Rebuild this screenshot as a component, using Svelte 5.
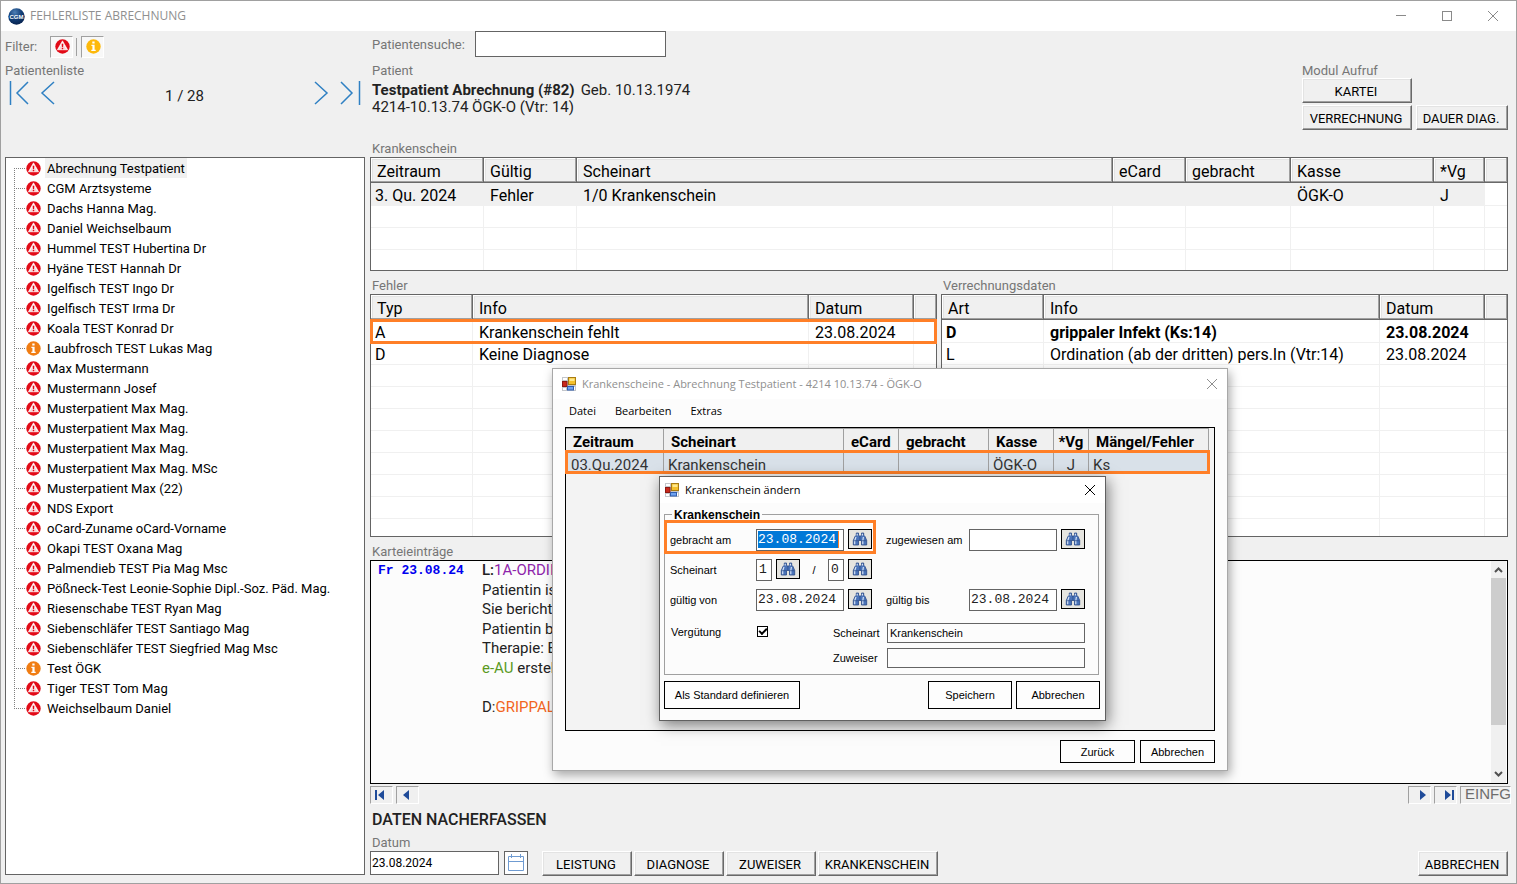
<script>
  const patients = [
    'Abrechnung Testpatient', 'CGM Arztsysteme', 'Dachs Hanna Mag.', 'Daniel Weichselbaum',
    'Hummel TEST Hubertina Dr', 'Hyäne TEST Hannah Dr', 'Igelfisch TEST Ingo Dr', 'Igelfisch TEST Irma Dr',
    'Koala TEST Konrad Dr', 'Laubfrosch TEST Lukas Mag', 'Max Mustermann', 'Mustermann Josef',
    'Musterpatient Max Mag.', 'Musterpatient Max Mag.', 'Musterpatient Max Mag.', 'Musterpatient Max Mag. MSc',
    'Musterpatient Max (22)', 'NDS Export', 'oCard-Zuname oCard-Vorname', 'Okapi TEST Oxana Mag',
    'Palmendieb TEST Pia Mag Msc', 'Pößneck-Test Leonie-Sophie Dipl.-Soz. Päd. Mag.',
    'Riesenschabe TEST Ryan Mag', 'Siebenschläfer TEST Santiago Mag', 'Siebenschläfer TEST Siegfried Mag Msc',
    'Test ÖGK', 'Tiger TEST Tom Mag', 'Weichselbaum Daniel'
  ];
  const infoOnly = new Set(['Laubfrosch TEST Lukas Mag', 'Test ÖGK']);
  let selected = $state(0);
  let remunerated = $state(true);

  const slips = {
    widths: [113, 93, null, 73, 105, 143, 51, 22],
    head: ['Zeitraum', 'Gültig', 'Scheinart', 'eCard', 'gebracht', 'Kasse', '*Vg', ''],
    rows: [{ cells: ['3. Qu. 2024', 'Fehler', '1/0 Krankenschein', '', '', 'ÖGK-O', 'J', ''], kind: 'current' }],
    blank: 3
  };
  const errors = {
    widths: [102, null, 105, 22],
    head: ['Typ', 'Info', 'Datum', ''],
    rows: [
      { cells: ['A', 'Krankenschein fehlt', '23.08.2024', ''], kind: 'marked' },
      { cells: ['D', 'Keine Diagnose', '', ''], kind: '' }
    ],
    blank: 8
  };
  const billing = {
    widths: [102, null, 105, 22],
    head: ['Art', 'Info', 'Datum', ''],
    rows: [
      { cells: ['D', 'grippaler Infekt (Ks:14)', '23.08.2024', ''], kind: 'strong' },
      { cells: ['L', 'Ordination (ab der dritten) pers.In (Vtr:14)', '23.08.2024', ''], kind: '' }
    ],
    blank: 8
  };
  const slipHead = ['Zeitraum', 'Scheinart', 'eCard', 'gebracht', 'Kasse', '*Vg', 'Mängel/Fehler'];
  const slipRow = ['03.Qu.2024', 'Krankenschein', '', '', 'ÖGK-O', 'J', 'Ks'];
  const slipWidths = [98, 180, 55, 90, 65, 35, 120];
</script>

{#snippet alertIcon()}
  <svg width="15" height="15" viewBox="0 0 15 15" aria-hidden="true">
    <circle cx="7.5" cy="7.5" r="7.2" fill="#e20a17" />
    <path d="M7.5 1.8 12.6 10.8H2.4Z" fill="#fff" stroke="#fff" stroke-width=".6" stroke-linejoin="round" />
    <path d="M7.5 3.6 11 9.9H4Z" fill="#e20a17" opacity=".18" />
    <path d="M6.7 4.8h1.6L8 8.300H7zM6.8 9h1.4v1.200H6.800z" fill="#e20a17" />
  </svg>
{/snippet}

{#snippet infoIcon(color)}
  <svg width="15" height="15" viewBox="0 0 15 15" aria-hidden="true">
    <circle cx="7.5" cy="7.5" r="7.2" fill={color} />
    <path d="M6.3 2.6h2.3v2H6.3zM5.4 5.7h3.2v5h1.1v1.2H5.3v-1.2h1.1V6.9h-1z" fill="#fff" />
  </svg>
{/snippet}

{#snippet formIcon()}
  <svg width="14" height="14" viewBox="0 0 14 14" aria-hidden="true">
    <rect width="14" height="14" fill="#c3c6cb" />
    <path d="M1 1h4v2H1zM1 11h3v2H1zM12 10h1v3h-1z" fill="#fff" />
    <rect x=".5" y="4.500" width="4.5" height="5" fill="#c8281c" stroke="#8d1a12" />
    <rect x="6.5" y=".5" width="7" height="7" fill="#f4c02c" stroke="#a87c12" />
    <path d="M7.5 1.500h5V4h-5z" fill="#fde88e" />
    <rect x="5.5" y="9.5" width="6" height="3.5" fill="#6ea2f0" stroke="#2f5cae" />
  </svg>
{/snippet}

{#snippet binoculars()}
  <svg width="16" height="14" viewBox="0 0 16 14" aria-hidden="true">
    <path d="M4.300 1h2.200v2.200l.7.800h1.600l.7-.8V1h2.200v2.200l1.300 1.300 1.700 4V13H9.500V8.500h-3V13H1.300V8.500l1.700-4 1.300-1.300z" fill="#4a73b8" stroke="#2b4a86" stroke-width=".8" />
    <path d="M4 5 2.700 8.700v3.500M11.400 5l-.6 3.700v3.500M5.200 1.800v1.700M10.400 1.800v1.700" fill="none" stroke="#d5e3f7" stroke-width="1.200" />
    <path d="M1.500 8.700h5M9.500 8.700h5M7.900 4v4" fill="none" stroke="#2b4a86" stroke-width=".7" />
  </svg>
{/snippet}

{#snippet closeIcon()}
  <svg width="12" height="12" viewBox="0 0 12 12" aria-hidden="true"><path d="M1 1l10 10M11 1 1 11" stroke="currentColor" fill="none" /></svg>
{/snippet}

{#snippet lookup(name)}
  <button class="lookup" aria-label={name}>{@render binoculars()}</button>
{/snippet}

{#snippet grid(data, name)}
  <table class="grid" aria-label={name}>
    <colgroup>
      {#each data.widths as w}<col style:width={w ? `${w}px` : 'auto'} />{/each}
    </colgroup>
    <thead><tr>{#each data.head as h}<th scope="col">{h}</th>{/each}</tr></thead>
    <tbody>
      {#each data.rows as row}
        <tr class={row.kind}>{#each row.cells as c}<td>{c}</td>{/each}</tr>
      {/each}
      {#each Array(data.blank) as _}
        <tr>{#each data.head as _}<td></td>{/each}</tr>
      {/each}
    </tbody>
  </table>
{/snippet}

<div class="window">
  <header class="titlebar">
    <svg width="17" height="17" viewBox="0 0 17 17" aria-hidden="true">
      <defs>
        <radialGradient id="ball" cx=".4" cy=".25" r=".8">
          <stop offset="0" stop-color="#4d7fb5" /><stop offset=".5" stop-color="#123f78" /><stop offset="1" stop-color="#06204a" />
        </radialGradient>
      </defs>
      <circle cx="8.500" cy="8.500" r="8.200" fill="url(#ball)" />
      <text x="8.500" y="10.500" text-anchor="middle" font-size="6" font-weight="700" fill="#fff" font-family="Liberation Sans, sans-serif">CGM</text>
    </svg>
    <h1>FEHLERLISTE ABRECHNUNG</h1>
    <div class="caption">
      <button aria-label="Minimieren"><svg width="12" height="12" viewBox="0 0 12 12"><path d="M1 5.500h10" stroke="currentColor" /></svg></button>
      <button aria-label="Maximieren"><svg width="12" height="12" viewBox="0 0 12 12"><rect x="1.500" y="1.500" width="9" height="9" fill="none" stroke="currentColor" /></svg></button>
      <button aria-label="Schließen">{@render closeIcon()}</button>
    </div>
  </header>

  <main>
    <aside>
      <div class="filter">
        <span class="cap">Filter:</span>
        <button class="sunken" aria-label="Fehler">{@render alertIcon()}</button>
        <i></i>
        <button class="sunken" aria-label="Hinweise">{@render infoIcon('#fdb90b')}</button>
      </div>
      <h2 class="cap">Patientenliste</h2>
      <nav class="pager">
        <button aria-label="Erster"><svg width="20" height="24" viewBox="0 0 20 24"><path d="M1.500 0v24M19 1 8 12l11 11" /></svg></button>
        <button aria-label="Zurück"><svg width="15" height="24" viewBox="0 0 15 24"><path d="M14 1 2 12l12 11" /></svg></button>
        <span>1 / 28</span>
        <button aria-label="Weiter"><svg width="15" height="24" viewBox="0 0 15 24"><path d="M1 1l12 11L1 23" /></svg></button>
        <button aria-label="Letzter"><svg width="21" height="24" viewBox="0 0 21 24"><path d="M1 1l11 11L1 23M19.500 0v24" /></svg></button>
      </nav>
      <ul class="tree">
        {#each patients as name, i}
          <li>
            {#if infoOnly.has(name)}{@render infoIcon('#f07d13')}{:else}{@render alertIcon()}{/if}
            <button class:active={selected === i} onclick={() => (selected = i)}>{name}</button>
          </li>
        {/each}
      </ul>
    </aside>

    <section class="work">
      <div class="top">
        <div class="who">
          <div class="search">
            <label class="cap" for="search">Patientensuche:</label>
            <input id="search" type="text" />
          </div>
          <h2 class="cap">Patient</h2>
          <p><b>Testpatient Abrechnung (#82)</b><span>Geb. 10.13.1974</span></p>
          <p>4214-10.13.74 ÖGK-O (Vtr: 14)</p>
        </div>
        <div class="modules">
          <h2 class="cap">Modul Aufruf</h2>
          <button class="raised">KARTEI</button>
          <button class="raised">VERRECHNUNG</button>
          <button class="raised">DAUER DIAG.</button>
        </div>
      </div>

      <h2 class="cap">Krankenschein</h2>
      <div class="frame slips">{@render grid(slips, 'Krankenschein')}</div>

      <div class="pair">
        <div>
          <h2 class="cap">Fehler</h2>
          <div class="frame tall">{@render grid(errors, 'Fehler')}</div>
        </div>
        <div>
          <h2 class="cap">Verrechnungsdaten</h2>
          <div class="frame tall">{@render grid(billing, 'Verrechnungsdaten')}</div>
        </div>
      </div>

      <h2 class="cap">Karteieinträge</h2>
      <div class="notes">
        <time>Fr 23.08.24</time>
        <div class="entry">
          <p><b>L:</b><span class="violet">1A-ORDII</span></p>
          <p>Patientin is</p>
          <p>Sie berichte</p>
          <p>Patientin b</p>
          <p>Therapie: E</p>
          <p><span class="green">e-AU</span> erstel</p>
          <p>&nbsp;</p>
          <p>D:<span class="orange">GRIPPAL</span></p>
        </div>
        <div class="scroll" aria-hidden="true">
          <svg width="9" height="6" viewBox="0 0 9 6"><path d="M1 5l3.500-3.500L8 5" /></svg>
          <span></span>
          <svg width="9" height="6" viewBox="0 0 9 6"><path d="M1 1l3.500 3.500L8 1" /></svg>
        </div>
      </div>

      <div class="status">
        <button class="sunken" aria-label="Zum Anfang"><svg width="10" height="10" viewBox="0 0 10 10"><path d="M0 0h2v10H0zM9 0v10L3 5z" /></svg></button>
        <button class="sunken" aria-label="Vorheriger"><svg width="10" height="10" viewBox="0 0 10 10"><path d="M8 0v10L2 5z" /></svg></button>
        <button class="sunken end" aria-label="Nächster"><svg width="10" height="10" viewBox="0 0 10 10"><path d="M2 0v10l6-5z" /></svg></button>
        <button class="sunken right" aria-label="Zum Ende"><svg width="10" height="10" viewBox="0 0 10 10"><path d="M1 0v10l6-5zM8 0h2v10H8z" /></svg></button>
        <span class="sunken mode">EINFG</span>
      </div>

      <h2 class="later">DATEN NACHERFASSEN</h2>
      <label class="cap" for="date">Datum</label>
      <div class="actions">
        <input id="date" type="text" value="23.08.2024" />
        <button class="calendar" aria-label="Kalender">
          <svg width="18" height="18" viewBox="0 0 18 18"><path d="M1.500 2.500h15v14h-15zM1.500 7.500h15M4.500 0v4M13.500 0v4" fill="none" stroke="#6f9bd1" /></svg>
        </button>
        <button class="raised first">LEISTUNG</button>
        <button class="raised">DIAGNOSE</button>
        <button class="raised">ZUWEISER</button>
        <button class="raised wide">KRANKENSCHEIN</button>
        <button class="raised last">ABBRECHEN</button>
      </div>
    </section>
  </main>

  <div class="dialog outer" role="dialog" aria-label="Krankenscheine">
    <header>
      {@render formIcon()}
      <h2>Krankenscheine - Abrechnung Testpatient - 4214 10.13.74 - ÖGK-O</h2>
      <button class="close" aria-label="Schließen">{@render closeIcon()}</button>
    </header>
    <nav class="menu"><button>Datei</button><button>Bearbeiten</button><button>Extras</button></nav>
    <div class="list">
      <table>
        <colgroup>{#each slipWidths as w}<col style:width={`${w}px`} />{/each}</colgroup>
        <thead><tr>{#each slipHead as h}<th scope="col">{h}</th>{/each}</tr></thead>
        <tbody><tr>{#each slipRow as c}<td>{c}</td>{/each}</tr></tbody>
      </table>
    </div>
    <footer><button class="flat">Zurück</button><button class="flat">Abbrechen</button></footer>
  </div>

  <div class="dialog inner" role="dialog" aria-label="Krankenschein ändern">
    <header>
      {@render formIcon()}
      <h2>Krankenschein ändern</h2>
      <button class="close" aria-label="Schließen">{@render closeIcon()}</button>
    </header>
    <fieldset>
      <legend>Krankenschein</legend>
      <div class="line">
        <div class="field spot">
          <label for="brought">gebracht am</label>
          <input id="brought" class="mono date picked" value="23.08.2024" />
          {@render lookup('gebracht am suchen')}
        </div>
        <div class="field">
          <label for="referred">zugewiesen am</label>
          <input id="referred" class="mono date" />
          {@render lookup('zugewiesen am suchen')}
        </div>
      </div>
      <div class="line">
        <div class="field">
          <label for="kind">Scheinart</label>
          <input id="kind" class="mono digit" value="1" />
          {@render lookup('Scheinart suchen')}
          <span class="slash">/</span>
          <input class="mono digit" value="0" aria-label="Scheinart Zusatz" />
          {@render lookup('Zusatz suchen')}
        </div>
      </div>
      <div class="line">
        <div class="field">
          <label for="from">gültig von</label>
          <input id="from" class="mono date" value="23.08.2024" />
          {@render lookup('gültig von suchen')}
        </div>
        <div class="field">
          <label for="until">gültig bis</label>
          <input id="until" class="mono date" value="23.08.2024" />
          {@render lookup('gültig bis suchen')}
        </div>
      </div>
      <div class="lower">
        <div class="field pay">
          <label for="pay">Vergütung</label>
          <input id="pay" type="checkbox" bind:checked={remunerated} />
        </div>
        <div class="texts">
          <label for="kindname">Scheinart</label>
          <input id="kindname" value="Krankenschein" readonly />
          <label for="referrer">Zuweiser</label>
          <input id="referrer" readonly />
        </div>
      </div>
    </fieldset>
    <footer>
      <button class="flat default">Als Standard definieren</button>
      <button class="flat">Speichern</button>
      <button class="flat">Abbrechen</button>
    </footer>
  </div>
</div>

<style>
  :global(body) { margin: 0; background: #f0f0f0; }
  * { box-sizing: border-box; }
  h1, h2, p, ul, fieldset, legend { margin: 0; padding: 0; font-weight: 400; }
  button, input { font: inherit; color: inherit; margin: 0; padding: 0; border: 0; background: none; border-radius: 0; outline: 0; }
  button { cursor: default; display: inline-flex; align-items: center; justify-content: center; white-space: nowrap; }
  svg { display: block; flex: none; }

  .window {
    position: relative; display: flex; flex-direction: column; min-height: 100vh;
    border: 1px solid #a0a0a0; background: #f0f0f0; color: #000;
    font: 13px/17px Roboto, sans-serif;
  }
  .titlebar { display: flex; align-items: center; height: 30px; padding-left: 7px; gap: 5px; background: #fff; color: #8f8f8f; }
  .titlebar h1 { flex: 1; font: 12px/16px "Open Sans", sans-serif; }
  .caption { display: flex; color: #8a8a8a; }
  .caption button { width: 46px; height: 30px; }

  main { flex: 1; display: flex; gap: 5px; padding: 0 8px 8px 4px; }
  aside { flex: none; width: 360px; display: flex; flex-direction: column; }
  .cap { display: block; font: 13px/17px Roboto, sans-serif; color: #767676; }
  .filter { display: flex; align-items: center; height: 31px; gap: 3px; }
  .filter i { width: 1px; height: 18px; margin-right: 1px; background: #a0a0a0; }
  .filter .cap { width: 42px; }
  .sunken { border: 1px solid; border-color: #a0a0a0 #fff #fff #a0a0a0; }
  .filter .sunken { width: 23px; height: 22px; padding-left: 1px; background: #f8f8f8; }
  .pager { display: flex; align-items: center; height: 24px; margin: 2px 4px 52px; font-size: 15px; gap: 11px; }
  .pager span { flex: 1; text-align: center; padding-top: 6px; color: #222; }
  .pager path { fill: none; stroke: #2f80c3; stroke-width: 1.5; }
  .tree { flex: 1; list-style: none; border: 1px solid #646464; background: #fff; padding-left: 8px; }
  .tree li {
    display: flex; align-items: center; height: 20px; padding-left: 12px; gap: 4px;
    background:
      repeating-linear-gradient(90deg, #808080 0 1px, transparent 1px 2px) 0 10px / 12px 1px no-repeat,
      repeating-linear-gradient(#808080 0 1px, transparent 1px 2px) 0 0 / 1px 20px no-repeat;
  }
  .tree li:first-child { background-position: 0 10px, 0 10px; background-size: 12px 1px, 1px 10px; }
  .tree li:last-child { background-size: 12px 1px, 1px 10px; }
  .tree button { height: 20px; padding: 0 2px; }
  .tree button.active { background: #f0f0f0; }

  .work { flex: 1; min-width: 0; display: flex; flex-direction: column; }
  .work > .cap, .pair .cap { padding-left: 2px; }
  .top { display: flex; justify-content: space-between; height: 109px; }
  .who { padding-left: 2px; font-size: 15px; color: #222; }
  .who b { font-weight: 700; margin-right: 6px; }
  .who .search { display: flex; align-items: center; gap: 10px; margin-bottom: 5px; }
  .who .search input { width: 191px; height: 26px; border: 1px solid #646464; background: #fff; }
  .who h2 + p { margin-top: 3px; }
  .modules { display: grid; grid-template-columns: 110px 92px; column-gap: 4px; row-gap: 2px; align-content: start; padding-top: 31px; }
  .modules .cap { grid-column: 1 / -1; margin-bottom: -3px; }
  .modules button:nth-of-type(-n + 2) { grid-column: 1; }
  .raised {
    height: 25px; padding: 1px 2px 0 0; background: #f0f0f0; border: 1px solid; border-color: #fff #696969 #696969 #fff;
    box-shadow: inset -1px -1px #a0a0a0, inset 1px 1px #e3e3e3;
  }

  .frame { border: 1px solid #646464; background: #fff; }
  .slips { height: 114px; }
  .tall { height: 243px; }
  table { border-collapse: separate; border-spacing: 0; table-layout: fixed; }
  .grid { width: 100%; font-size: 16px; line-height: 18px; }
  .grid th {
    height: 25px; padding: 3px 0 0 6px; text-align: left; font-weight: 400; background: #f0f0f0;
    border-right: 1px solid #696969; border-bottom: 1px solid #696969;
    box-shadow: inset -1px -1px #a0a0a0, inset 1px 1px #fff, inset 2px 2px #e3e3e3;
  }
  .grid th:last-child { border-right: 0; }
  .grid td { height: 22px; padding: 3px 0 0 6px; white-space: nowrap; border-right: 1px solid #f0f0f0; border-bottom: 1px solid #f0f0f0; }
  .grid td:first-child { padding-left: 4px; }
  .grid td:last-child { border-right: 0; }
  .grid tbody tr:first-child td { height: 23px; }
  .grid tbody tr:last-child td { border-bottom: 0; }
  .slips tbody tr:last-child td { height: 20px; }
  .tall tbody tr:last-child td { height: 17px; }
  .current td:not(:last-child) { background: #f0f0f0; }
  .strong td { font-weight: 700; }
  .marked { outline: 3px solid #ff7f27; outline-offset: -2px; }
  .pair { display: grid; grid-template-columns: 1fr 1fr; gap: 4px; margin: 6px 0; }

  .notes { flex: 1; display: flex; border: 1px solid #000; background: #fcfcfc; font-size: 15px; line-height: 19px; color: #222; }
  .notes time { width: 111px; padding-left: 7px; font: 700 13px/19px "Liberation Mono", monospace; color: #0000f0; }
  .entry { flex: 1; }
  .entry p:nth-child(even) { line-height: 20px; }
  .entry b { font-weight: 500; }
  .violet { color: #8e24aa; }
  .green { color: #5a9a1f; }
  .orange { color: #f26522; }
  .scroll { width: 15px; margin-right: 1px; display: flex; flex-direction: column; align-items: center; background: #f0f0f0; padding: 6px 0; }
  .scroll path { fill: none; stroke: #505050; stroke-width: 2; }
  .scroll span { width: 15px; height: 147px; margin: 5px 0 auto; background: #cdcdcd; }

  .status { display: flex; gap: 3px; height: 18px; margin: 2px -3px 7px 0; }
  .status button { width: 23px; padding-right: 3px; fill: #1f4b99; }
  .status .end { margin-left: auto; }
  .status .end, .status .right { padding: 0 0 0 7px; }
  .mode { width: 51px; padding-left: 4px; font: 15px/14px "Liberation Sans", sans-serif; color: #6d6d6d; }
  .work .later { padding-left: 2px; margin-bottom: 5px; font: 500 16px/18px Roboto, sans-serif; color: #222; }
  .actions { display: flex; align-items: stretch; gap: 2px; height: 24px; }
  .actions input { width: 129px; padding-left: 1px; border: 1px solid #646464; background: #fff; font-size: 12px; }
  .calendar { width: 24px; margin-left: 3px; border: 1px solid #646464; background: #fff; }
  .actions .raised { width: 90px; height: 25px; }
  .actions .first { margin-left: 12px; }
  .actions .wide { width: 120px; }
  .actions .last { margin-left: auto; }

  .dialog { position: absolute; display: flex; flex-direction: column; background: #fcfcfc; font: 11px/16px "Liberation Sans", sans-serif; }
  .dialog header { display: flex; align-items: center; gap: 6px; background: #fff; }
  .dialog header h2 { flex: 1; font: inherit; white-space: nowrap; }
  .dialog .close { width: 31px; height: 28px; }
  .flat { border: 1px solid #000; background: #fdfdfd; }

  .outer { left: 551px; top: 367px; width: 676px; height: 403px; border: 1px solid #a8a8a8; box-shadow: 2px 4px 10px rgba(0, 0, 0, .35); }
  .outer header { height: 30px; padding-left: 9px; color: #8f8f8f; font: 11px/16px "Open Sans", sans-serif; }
  .menu { display: flex; gap: 19px; height: 28px; padding: 3px 0 0 16px; font: 11px/16px "Open Sans", sans-serif; align-items: flex-start; }
  .menu button { height: 18px; }
  .list { flex: 1; margin: 0 12px; border: 1px solid #000; background: #f3f3f3; font: 15px/16px Roboto, sans-serif; color: #333; }
  .list table { width: 643px; }
  .list th { height: 23px; padding: 4px 0 0 7px; text-align: left; font-weight: 700; color: #000; background: #f0f0f0; border-right: 1px solid #a0a0a0; border-top: 1px solid #a0a0a0; white-space: nowrap; }
  .list td { height: 22px; padding: 5px 0 0 4px; background: #d9e1e9; border-right: 1px solid #a0a0a0; white-space: nowrap; }
  .list td:first-child { padding-left: 5px; }
  .list th:nth-child(6), .list td:nth-child(6) { padding-left: 0; text-align: center; }
  .list tbody tr { outline: 3px solid #ff7f27; outline-offset: -2px; }
  .outer footer { display: flex; justify-content: flex-end; gap: 5px; padding: 9px 12px 7px; }
  .outer .flat { width: 75px; height: 23px; }

  .inner { left: 658px; top: 475px; width: 447px; height: 245px; border: 1px solid #606060; box-shadow: 2px 4px 14px rgba(0, 0, 0, .5); }
  .inner header { height: 26px; padding-left: 5px; font: 11px/16px "Open Sans", sans-serif; }
  fieldset { min-width: 0; margin: 2px 6px 0 4px; height: 170px; border: 1px solid #a0a0a0; padding-top: 6px; }
  legend { margin-left: 7px; padding: 3px 2px 0; font-weight: 700; font-size: 12px; line-height: 15px; height: 18px; }
  .line { display: flex; gap: 14px; height: 22px; margin: 0 0 8px 5px; }
  .field { display: flex; gap: 4px; align-items: flex-start; height: 22px; }
  .field label { width: 82px; line-height: 23px; }
  .field + .field label { width: 79px; white-space: nowrap; }
  .spot { position: relative; }
  .spot::before { content: ""; position: absolute; inset: -9px -4px -3px -6px; border: 3px solid #ff7f27; pointer-events: none; }
  .mono { height: 22px; padding: 0 1px 2px; border: 1px solid #646464; background: #fff; font: 13px/17px "Liberation Mono", monospace; color: #222; }
  .date { width: 88px; }
  .digit { width: 16px; padding-left: 2px; }
  .picked { color: #fff; background: linear-gradient(#ff7f27, #ff7f27) 81px 1px / 1px 17px no-repeat, linear-gradient(#0078d7, #0078d7) 1px 1px / 80px 17px no-repeat, #fff; }
  .lookup { width: 24px; height: 20px; border: 1px solid #000; background: #e6e5e0; }
  .slash { width: 20px; line-height: 22px; text-align: center; }
  .lower { display: flex; justify-content: space-between; margin: 12px 13px 0 6px; }
  .pay label { line-height: 18px; }
  .pay input { appearance: none; width: 11px; height: 11px; margin-top: 3px; border: 1px solid #000; background: #fff; }
  .pay input:checked::after { content: ""; display: block; width: 6px; height: 3px; margin: 1px; border: solid #000; border-width: 0 0 2px 2px; transform: rotate(-45deg); }
  .texts { display: grid; grid-template-columns: 50px 198px; column-gap: 4px; row-gap: 5px; line-height: 20px; }
  .texts input { height: 20px; padding-left: 2px; border: 1px solid #646464; background: #fcfcfc; }
  .inner footer { display: flex; gap: 4px; padding: 6px 5px 0 4px; }
  .inner .flat { width: 84px; height: 28px; }
  .inner .default { width: 136px; margin-right: auto; }
</style>
